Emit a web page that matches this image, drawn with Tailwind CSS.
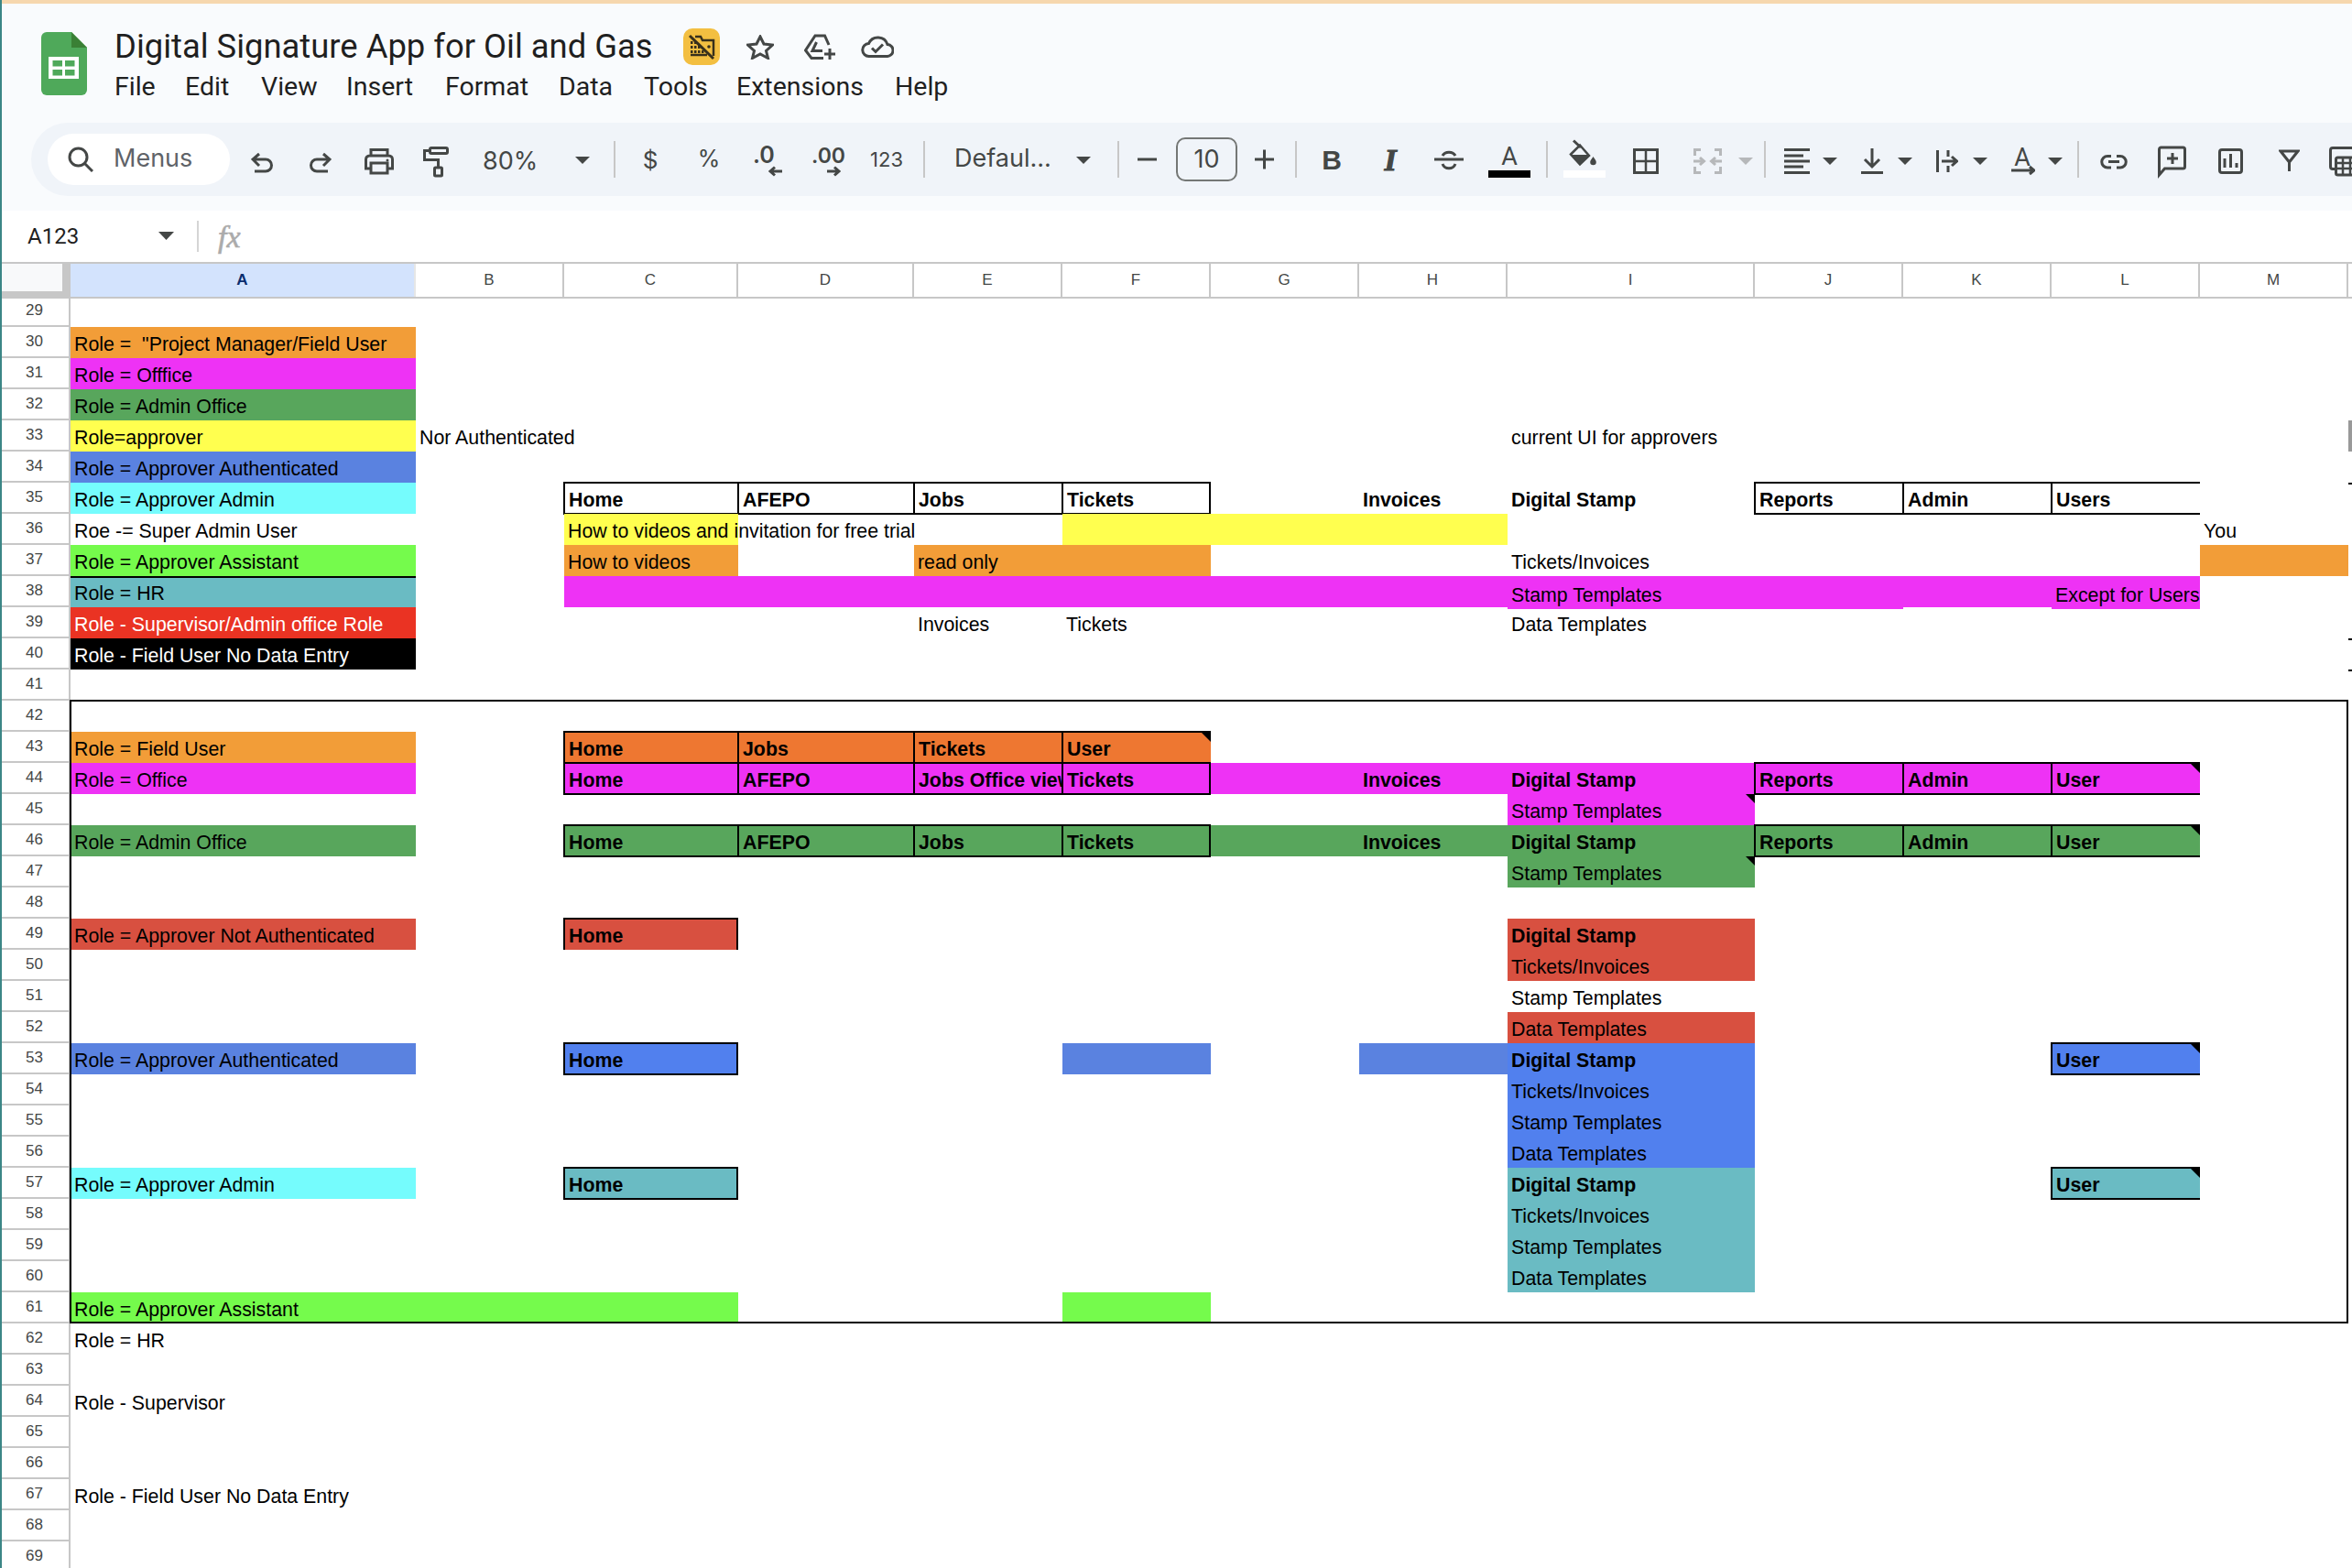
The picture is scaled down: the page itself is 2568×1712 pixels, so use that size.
<!DOCTYPE html>
<html lang="en">
<head>
  <meta charset="UTF-8">
  <title>Digital Signature App for Oil and Gas</title>
  <script src="https://cdn.jsdelivr.net/npm/@tailwindcss/browser@4"></script>
</head>
<body class="bg-white text-black font-['Liberation_Sans',sans-serif]">
<div class="relative w-[2568px] h-[1712px] overflow-hidden">
  <div class="absolute left-0 top-0 w-[2px] h-full bg-[#3b8686] z-20"></div>

  <!-- title + menu -->
  <div class="h-[230px] bg-[#f9fbfd] border-t-[4px] border-[#f6d7ae]">
    <div class="flex pl-[45px] pt-[31px] h-[130px]">
      <svg class="w-[50px] h-[69px]" viewBox="0 0 50 69">
        <path d="M6 0H33L50 17V63a6 6 0 0 1-6 6H6a6 6 0 0 1-6-6V6a6 6 0 0 1 6-6Z" fill="#4fa95a"/>
        <path d="M33 0L50 17H33Z" fill="#3a8035"/>
        <rect x="8" y="27" width="33" height="24" fill="#fff"/>
        <rect x="12.5" y="31" width="10.5" height="6.5" fill="#4fa95a"/><rect x="26" y="31" width="10.5" height="6.5" fill="#4fa95a"/>
        <rect x="12.5" y="41" width="10.5" height="6.5" fill="#4fa95a"/><rect x="26" y="41" width="10.5" height="6.5" fill="#4fa95a"/>
      </svg>
      <div class="ml-[30px] -mt-[4px] font-['Roboto',sans-serif]">
        <div class="flex items-center h-[40px]">
          <span class="w-[621px] text-[36.4px] leading-[40px] whitespace-nowrap text-[#1f1f1f]">Digital Signature App for Oil and Gas</span>
          <div class="w-[40px] h-[40px] rounded-[10px] bg-[#f3bf41]">
            <svg class="w-[40px] h-[40px]" viewBox="0 0 40 40">
              <path d="M13 9H19L21 13H33V30" fill="none" stroke="#38301c" stroke-width="2.5"/>
              <path d="M8 14h2.500v3h-2.500ZM12 14h2.500v3h-2.500ZM8 19h2.500v3h-2.500ZM12 19h2.500v3h-2.500ZM16 19h2.500v3h-2.500ZM8 24h2.500v3h-2.500ZM12 24h2.500v3h-2.500ZM16 24h2.500v3h-2.500ZM20 24h2.500v3h-2.500Z" fill="#38301c"/>
              <path d="M8 29H26" stroke="#38301c" stroke-width="2.500"/>
              <circle cx="28" cy="20" r="1.800" fill="#38301c"/>
              <path d="M7 8L33 33" stroke="#38301c" stroke-width="3"/>
            </svg>
          </div>
          <svg class="ml-[29px] w-[30px] h-[27px]" viewBox="0 0 30 27"><path d="M15 2L19 10L28.500 11L21.500 17.500L23.500 25.500L15 21L6.500 25.500L8.500 17.500L1.500 11L11 10Z" fill="none" stroke="#444746" stroke-width="3"/></svg>
          <svg class="ml-[33px] w-[34px] h-[28px]" viewBox="0 0 34 28"><path d="M27 12L22.500 2H12L1.500 18L8 26.500H21M13.500 9L9 18.500H20" fill="none" stroke="#444746" stroke-width="3"/><path d="M28 16V28M22 22H34" fill="none" stroke="#444746" stroke-width="3"/></svg>
          <svg class="ml-[28px] w-[36px] h-[24px]" viewBox="0 0 36 24"><path d="M9 22.500H28a6.500 6.500 0 0 0 1-13A11 11 0 0 0 8.500 8.500A7 7 0 0 0 9 22.500Z" fill="none" stroke="#444746" stroke-width="3"/><path d="M12 13.500l4 4l8-8" fill="none" stroke="#444746" stroke-width="3"/></svg>
        </div>
        <div class="flex items-center h-[40px] mt-[4px] text-[28.5px] text-[#1f1f1f] whitespace-nowrap">
          <span class="w-[77px]">File</span>
          <span class="w-[83px]">Edit</span>
          <span class="w-[93px]">View</span>
          <span class="w-[108px]">Insert</span>
          <span class="w-[124px]">Format</span>
          <span class="w-[93px]">Data</span>
          <span class="w-[101px]">Tools</span>
          <span class="w-[173px]">Extensions</span>
          <span>Help</span>
        </div>
      </div>
    </div>

    <!-- toolbar -->
    <div class="ml-[34px] h-[80px] pl-[18px] rounded-l-[40px] bg-[#f0f4f9] flex items-center overflow-hidden text-[#444746] font-['Inter',sans-serif]">
      <div class="w-[199px] h-[56px] shrink-0 rounded-full bg-white flex items-center pl-[22px]">
        <svg class="w-[28px] h-[28px]" viewBox="0 0 28 28"><circle cx="11.500" cy="11.500" r="9.500" fill="none" stroke="#444746" stroke-width="3"/><path d="M18.500 18.500L27 27" stroke="#444746" stroke-width="3"/></svg>
        <span class="ml-[22px] text-[27px] text-[#5f6368] -mt-[2px]">Menus</span>
      </div>
      <svg class="shrink-0 ml-[23px] w-[24px] h-[48px]" viewBox="0 0 24 48"><path d="M9 18L2 24L9 31M2 24H16A6.500 6.500 0 0 1 16 37H4" fill="none" stroke="#444746" stroke-width="3"/></svg>
      <svg class="shrink-0 ml-[40px] w-[24px] h-[48px]" viewBox="0 0 24 48"><path d="M15 18L22 24L15 31M22 24H8A6.500 6.500 0 0 0 8 37H20" fill="none" stroke="#444746" stroke-width="3"/></svg>
      <svg class="shrink-0 ml-[36px] w-[32px] h-[48px]" viewBox="0 0 32 48"><path d="M7 20V13.500H25V20M7 34H1.500V24a4 4 0 0 1 4-4H26.500a4 4 0 0 1 4 4V34H25" fill="none" stroke="#444746" stroke-width="3"/><rect x="7" y="28" width="18" height="11" fill="none" stroke="#444746" stroke-width="3"/><circle cx="25" cy="25" r="1.500" fill="#444746"/></svg>
      <svg class="shrink-0 ml-[32px] w-[28px] h-[48px]" viewBox="0 0 28 48"><rect x="7.500" y="11.500" width="19" height="6" rx="1.500" fill="none" stroke="#444746" stroke-width="3"/><path d="M7.500 14.500H1.500V24.500H16.500V33" fill="none" stroke="#444746" stroke-width="3"/><rect x="12.500" y="33" width="8" height="9" rx="1" fill="none" stroke="#444746" stroke-width="3"/></svg>
      <span class="shrink-0 ml-[37px] w-[60px] text-[27px] mt-[4px]">80%</span>
      <svg class="shrink-0 ml-[41px] w-[16px] h-[48px]" viewBox="0 0 16 48"><path d="M0 21H16L8 29Z" fill="#444746"/></svg>
      <div class="shrink-0 ml-[26px] w-[2px] h-[40px] bg-[#c7c7c7]"></div>
      <span class="shrink-0 ml-[31px] w-[14px] flex justify-center text-[26px]">$</span>
      <span class="shrink-0 ml-[46px] w-[22px] flex justify-center text-[25px]">%</span>
      <svg class="shrink-0 ml-[37px] w-[32px] h-[48px]" viewBox="0 0 32 48"><text x="0" y="28" font-size="25" font-weight="600" font-family="Inter" fill="#444746">.0</text><path d="M32 37H19M24 32.500L19 37L24 41.500" fill="none" stroke="#444746" stroke-width="3"/></svg>
      <svg class="shrink-0 ml-[32px] w-[33px] h-[48px] overflow-visible" viewBox="0 0 33 48"><text x="0" y="28" font-size="23" font-weight="600" font-family="Inter" fill="#444746">.00</text><path d="M17 37H30M25 32.500L30 37L25 41.500" fill="none" stroke="#444746" stroke-width="3"/></svg>
      <span class="shrink-0 ml-[32px] w-[34px] text-[22px] whitespace-nowrap flex justify-center">123</span>
      <div class="shrink-0 ml-[23px] w-[2px] h-[40px] bg-[#c7c7c7]"></div>
      <span class="shrink-0 ml-[32px] w-[104px] text-[27px] whitespace-nowrap -mt-[2px]">Defaul...</span>
      <svg class="shrink-0 ml-[29px] w-[16px] h-[48px]" viewBox="0 0 16 48"><path d="M0 21H16L8 29Z" fill="#444746"/></svg>
      <div class="shrink-0 ml-[29px] w-[2px] h-[40px] bg-[#c7c7c7]"></div>
      <svg class="shrink-0 ml-[20px] w-[21px] h-[48px]" viewBox="0 0 21 48"><path d="M0 24H21" stroke="#444746" stroke-width="3"/></svg>
      <div class="shrink-0 ml-[21px] w-[67px] h-[48px] rounded-[10px] border-2 border-[#747775] flex items-center justify-center text-[27px]">10</div>
      <svg class="shrink-0 ml-[19px] w-[21px] h-[48px]" viewBox="0 0 21 48"><path d="M0 24H21M10.500 13.500V34.500" stroke="#444746" stroke-width="3"/></svg>
      <div class="shrink-0 ml-[23px] w-[2px] h-[40px] bg-[#c7c7c7]"></div>
      <span class="shrink-0 ml-[30px] w-[16px] flex justify-center text-[30px] font-bold font-['Liberation_Sans',sans-serif]">B</span>
      <span class="shrink-0 ml-[46px] w-[20px] flex justify-center text-[34px] italic font-bold font-['Liberation_Serif',serif] [-webkit-text-stroke:1px_#444746]">I</span>
      <svg class="shrink-0 ml-[38px] w-[32px] h-[48px]" viewBox="0 0 32 48"><path d="M0 24H32" stroke="#444746" stroke-width="3"/><path d="M9 20a7.500 6 0 0 1 14 0M9 29a7.500 7.500 0 0 0 14 0" fill="none" stroke="#444746" stroke-width="3"/></svg>
      <div class="shrink-0 ml-[27px] w-[46px] h-[48px] flex flex-col items-center">
        <span class="h-[36px] pt-[3px] leading-[36px] text-[27px] font-['Roboto',sans-serif]">A</span>
        <span class="w-[46px] h-[8px] bg-black"></span>
      </div>
      <div class="shrink-0 ml-[17px] w-[2px] h-[40px] bg-[#c7c7c7]"></div>
      <svg class="shrink-0 ml-[17px] w-[46px] h-[48px]" viewBox="0 0 46 48">
        <path d="M8 18.500L18 8.500L28 20L18 29.500Z" fill="none" stroke="#444746" stroke-width="2.500"/>
        <path d="M8.500 19H27.500L18 29.500Z" fill="#444746"/>
        <path d="M11 3.500L19 11" stroke="#444746" stroke-width="3"/>
        <path d="M32.500 21c2 3 3.300 4.500 3.300 6a3.300 3.300 0 0 1-6.600 0c0-1.500 1.300-3 3.300-6Z" fill="#444746"/>
        <rect x="0" y="36" width="46" height="8" fill="#fff"/>
      </svg>
      <svg class="shrink-0 ml-[30px] w-[28px] h-[48px]" viewBox="0 0 28 48"><rect x="1.500" y="13.500" width="25" height="25" fill="none" stroke="#444746" stroke-width="3"/><path d="M14 13V39M1 26H27" stroke="#444746" stroke-width="2.500"/></svg>
      <svg class="shrink-0 ml-[38px] w-[31px] h-[48px]" viewBox="0 0 31 48"><path d="M8 13.500H1.500V20M23 13.500H29.500V20M8 38.500H1.500V32M23 38.500H29.500V32M0 26H11M7 22L11.500 26L7 30M31 26H20M24 22L19.500 26L24 30" fill="none" stroke="#b6b8ba" stroke-width="3"/></svg>
      <svg class="shrink-0 ml-[18px] w-[16px] h-[48px]" viewBox="0 0 16 48"><path d="M0 22H16L8 30Z" fill="#b6b8ba"/></svg>
      <div class="shrink-0 ml-[12px] w-[2px] h-[40px] bg-[#c7c7c7]"></div>
      <svg class="shrink-0 ml-[20px] w-[28px] h-[48px]" viewBox="0 0 28 48"><path d="M0 13.500H28M0 20H21M0 26H28M0 32H21M0 38.500H28" stroke="#444746" stroke-width="3"/></svg>
      <svg class="shrink-0 ml-[14px] w-[16px] h-[48px]" viewBox="0 0 16 48"><path d="M0 22H16L8 30Z" fill="#444746"/></svg>
      <svg class="shrink-0 ml-[26px] w-[24px] h-[48px]" viewBox="0 0 24 48"><path d="M12 12V32M4 24L12 32L20 24M0 38.500H24" fill="none" stroke="#444746" stroke-width="3"/></svg>
      <svg class="shrink-0 ml-[16px] w-[16px] h-[48px]" viewBox="0 0 16 48"><path d="M0 22H16L8 30Z" fill="#444746"/></svg>
      <svg class="shrink-0 ml-[26px] w-[24px] h-[48px]" viewBox="0 0 24 48"><path d="M1.500 14V38M13 14V21M13 31V38M6 26H22M17 21L22.500 26L17 31" fill="none" stroke="#444746" stroke-width="3"/></svg>
      <svg class="shrink-0 ml-[16px] w-[16px] h-[48px]" viewBox="0 0 16 48"><path d="M0 22H16L8 30Z" fill="#444746"/></svg>
      <svg class="shrink-0 ml-[26px] w-[26px] h-[48px]" viewBox="0 0 26 48"><text x="12" y="31" text-anchor="middle" font-size="27" font-family="Roboto" fill="#444746">A</text><path d="M0 36H24M20 32L25 36L20 40" fill="none" stroke="#444746" stroke-width="3"/></svg>
      <svg class="shrink-0 ml-[14px] w-[16px] h-[48px]" viewBox="0 0 16 48"><path d="M0 22H16L8 30Z" fill="#444746"/></svg>
      <div class="shrink-0 ml-[16px] w-[2px] h-[40px] bg-[#c7c7c7]"></div>
      <svg class="shrink-0 ml-[22px] w-[32px] h-[48px]" viewBox="0 0 32 48"><path d="M13 20.500H9a6.200 6.200 0 0 0 0 12.500H13M19 20.500H23a6.200 6.200 0 0 1 0 12.500H19M10 26.500H22" fill="none" stroke="#444746" stroke-width="3"/></svg>
      <svg class="shrink-0 ml-[32px] w-[31px] h-[48px]" viewBox="0 0 31 48"><path d="M1.500 41V13a2 2 0 0 1 2-2H27.500a2 2 0 0 1 2 2V32a2 2 0 0 1-2 2H7.500Z" fill="none" stroke="#444746" stroke-width="3"/><path d="M16 17V29M10 23H22" stroke="#444746" stroke-width="3"/></svg>
      <svg class="shrink-0 ml-[35px] w-[27px] h-[48px]" viewBox="0 0 27 48"><rect x="1.500" y="13.500" width="24" height="25" rx="2.500" fill="none" stroke="#444746" stroke-width="3"/><path d="M7 23V33M13.500 18V33M20 28V33" stroke="#444746" stroke-width="3"/></svg>
      <svg class="shrink-0 ml-[39px] w-[23px] h-[48px]" viewBox="0 0 23 48"><path d="M2 15H21L11.500 27Z" fill="none" stroke="#444746" stroke-width="3"/><path d="M11.500 27V37" stroke="#444746" stroke-width="3"/></svg>
      <svg class="shrink-0 ml-[32px] w-[40px] h-[48px]" viewBox="0 0 40 48"><path d="M30 11.500H4a2.500 2.500 0 0 0-2.500 2.500V32a2.500 2.500 0 0 0 2.500 2.500H6" fill="none" stroke="#444746" stroke-width="3"/><rect x="7.500" y="22" width="30" height="19" rx="2" fill="none" stroke="#444746" stroke-width="3"/><path d="M7 28H38M7 34H38M15 22V41M23 22V41" stroke="#444746" stroke-width="2.500"/></svg>
    </div>
  </div>

  <!-- formula bar -->
  <div class="h-[56px] flex items-center bg-white">
    <span class="ml-[30px] w-[143px] text-[24px] font-['Roboto',sans-serif] text-[#1f1f1f]">A123</span>
    <svg class="w-[17px] h-[10px]" viewBox="0 0 17 10"><path d="M0 0H17L8.500 9Z" fill="#444746"/></svg>
    <div class="ml-[25px] w-[2px] h-[34px] bg-[#d5d5d5]"></div>
    <span class="ml-[21px] text-[34px] italic font-['Liberation_Serif',serif] text-[#ababab] [-webkit-text-stroke:0.6px_#ababab]">fx</span>
  </div>

  <!-- column headers -->
  <div class="relative z-10 h-[40px] border-y-2 border-[#c7c7c7] grid grid-cols-[77px_377px_162px_190px_192px_162px_162px_162px_162px_270px_162px_162px_162px_162px_4px] text-[17px] text-[#444746] bg-white">
    <div class="bg-[#c7c7c7]"><div class="w-[68px] h-[30px] bg-[#f8f9fa]"></div></div>
    <div class="flex items-center justify-center bg-[#d3e3fd] text-[#0b2d6e] font-bold border-r-2 border-[#e6e6e6]">A</div>
    <div class="flex items-center justify-center border-r-2 border-[#c7c7c7]">B</div>
    <div class="flex items-center justify-center border-r-2 border-[#c7c7c7]">C</div>
    <div class="flex items-center justify-center border-r-2 border-[#c7c7c7]">D</div>
    <div class="flex items-center justify-center border-r-2 border-[#c7c7c7]">E</div>
    <div class="flex items-center justify-center border-r-2 border-[#c7c7c7]">F</div>
    <div class="flex items-center justify-center border-r-2 border-[#c7c7c7]">G</div>
    <div class="flex items-center justify-center border-r-2 border-[#c7c7c7]">H</div>
    <div class="flex items-center justify-center border-r-2 border-[#c7c7c7]">I</div>
    <div class="flex items-center justify-center border-r-2 border-[#c7c7c7]">J</div>
    <div class="flex items-center justify-center border-r-2 border-[#c7c7c7]">K</div>
    <div class="flex items-center justify-center border-r-2 border-[#c7c7c7]">L</div>
    <div class="flex items-center justify-center border-r-2 border-[#c7c7c7]">M</div>
    <div></div>
  </div>

  <!-- sheet -->
  <div id="sheet" class="-mt-[3px] grid grid-cols-[77px_377px_162px_190px_192px_162px_162px_162px_162px_270px_162px_162px_162px_162px_4px] auto-rows-[34px]"></div>
</div>

<script>
  const sheet = document.getElementById("sheet");

  // fill colours
  const orange = "bg-[#f29d38]", magenta = "bg-[#ee32f5]", green = "bg-[#58a65c]", yellow = "bg-[#ffff4f]";
  const blue = "bg-[#5a82e0]", blue2 = "bg-[#5180ee]", cyan = "bg-[#75fcfd]", lime = "bg-[#75fb4c]";
  const teal = "bg-[#6abbc3]", red = "bg-[#ea3323]", red2 = "bg-[#d85040]", dark = "bg-[#ee7731]";

  // bordered header cells
  const box = "font-bold -my-px -ml-px pb-[1px] border-y-2 border-l-2 border-black";
  const boxEnd = "font-bold -my-px -ml-px pb-[1px] border-2 border-black";

  // row, column (A = 2), span, text, classes, corner note
  const cells = [
    [30, 2, 1, 'Role =  "Project Manager/Field User', orange],
    [31, 2, 1, "Role = Offfice", magenta],
    [32, 2, 1, "Role = Admin Office", green],
    [33, 2, 1, "Role=approver", yellow],
    [33, 3, 1, "Nor Authenticated", ""],
    [33, 10, 1, "current UI for approvers", ""],
    [33, 15, 1, "", "bg-[#999999]"],
    [34, 2, 1, "Role = Approver Authenticated", blue],
    [35, 2, 1, "Role = Approver Admin", cyan],
    [35, 4, 1, "Home", box],
    [35, 5, 1, "AFEPO", box],
    [35, 6, 1, "Jobs", box],
    [35, 7, 1, "Tickets", boxEnd],
    [35, 9, 1, "Invoices", "font-bold"],
    [35, 10, 1, "Digital Stamp", "font-bold"],
    [35, 11, 1, "Reports", box],
    [35, 12, 1, "Admin", box],
    [35, 13, 1, "Users", box],
    [35, 15, 1, "", "border-t-2 border-black"],
    [36, 2, 1, "Roe -= Super Admin User", ""],
    [36, 4, 1, "How to videos and invitation for free trial", yellow],
    [36, 7, 3, "", yellow],
    [36, 14, 1, "You", ""],
    [37, 2, 1, "Role = Approver Assistant", lime],
    [37, 4, 1, "How to videos", orange],
    [37, 6, 2, "read only", orange],
    [37, 10, 1, "Tickets/Invoices", ""],
    [37, 14, 1, "", orange],
    [38, 2, 1, "Role = HR", teal + " border-t-2 border-black"],
    [38, 4, 6, "", magenta],
    [38, 10, 2, "Stamp Templates", magenta + " -mb-[2px]"],
    [38, 12, 1, "", magenta],
    [38, 13, 1, "Except for Users", magenta + " -mb-[2px]"],
    [39, 2, 1, "Role - Supervisor/Admin office Role", red + " text-white"],
    [39, 6, 1, "Invoices", ""],
    [39, 7, 1, "Tickets", ""],
    [39, 10, 1, "Data Templates", ""],
    [40, 2, 1, "Role - Field User No Data Entry", "bg-black text-white"],
    [40, 15, 1, "", "border-t-2 border-black"],
    [41, 15, 1, "", "border-t-2 border-black"],

    [43, 2, 1, "Role = Field User", orange],
    [43, 4, 1, "Home", dark + " " + box],
    [43, 5, 1, "Jobs", dark + " " + box],
    [43, 6, 1, "Tickets", dark + " " + box],
    [43, 7, 1, "User", dark + " " + box, true],
    [44, 2, 1, "Role = Office", magenta],
    [44, 4, 1, "Home", magenta + " " + box],
    [44, 5, 1, "AFEPO", magenta + " " + box],
    [44, 6, 1, "Jobs Office view", magenta + " overflow-hidden " + box],
    [44, 7, 1, "Tickets", magenta + " " + boxEnd],
    [44, 8, 1, "", magenta],
    [44, 9, 1, "Invoices", magenta + " font-bold"],
    [44, 10, 1, "Digital Stamp", magenta + " font-bold"],
    [44, 11, 1, "Reports", magenta + " " + box],
    [44, 12, 1, "Admin", magenta + " " + box],
    [44, 13, 1, "User", magenta + " " + box, true],
    [45, 10, 1, "Stamp Templates", magenta, true],
    [46, 2, 1, "Role = Admin Office", green],
    [46, 4, 1, "Home", green + " " + box],
    [46, 5, 1, "AFEPO", green + " " + box],
    [46, 6, 1, "Jobs", green + " " + box],
    [46, 7, 1, "Tickets", green + " " + boxEnd],
    [46, 8, 1, "", green],
    [46, 9, 1, "Invoices", green + " font-bold"],
    [46, 10, 1, "Digital Stamp", green + " font-bold"],
    [46, 11, 1, "Reports", green + " " + box],
    [46, 12, 1, "Admin", green + " " + box],
    [46, 13, 1, "User", green + " " + box, true],
    [47, 10, 1, "Stamp Templates", green, true],

    [49, 2, 1, "Role = Approver Not Authenticated", red2],
    [49, 4, 1, "Home", red2 + " font-bold -mt-px -ml-px border-t-2 border-x-2 border-black"],
    [49, 10, 1, "Digital Stamp", red2 + " font-bold"],
    [50, 10, 1, "Tickets/Invoices", red2],
    [51, 10, 1, "Stamp Templates", ""],
    [52, 10, 1, "Data Templates", red2],
    [53, 2, 1, "Role = Approver Authenticated", blue],
    [53, 4, 1, "Home", blue2 + " " + boxEnd],
    [53, 7, 1, "", blue],
    [53, 9, 1, "", blue],
    [53, 10, 1, "Digital Stamp", blue2 + " font-bold"],
    [53, 13, 1, "User", blue2 + " " + box, true],
    [54, 10, 1, "Tickets/Invoices", blue2],
    [55, 10, 1, "Stamp Templates", blue2],
    [56, 10, 1, "Data Templates", blue2],
    [57, 2, 1, "Role = Approver Admin", cyan],
    [57, 4, 1, "Home", teal + " " + boxEnd],
    [57, 10, 1, "Digital Stamp", teal + " font-bold"],
    [57, 13, 1, "User", teal + " " + box, true],
    [58, 10, 1, "Tickets/Invoices", teal],
    [59, 10, 1, "Stamp Templates", teal],
    [60, 10, 1, "Data Templates", teal],
    [61, 2, 3, "Role = Approver Assistant", lime],
    [61, 7, 1, "", lime],
    [62, 2, 1, "Role = HR", ""],
    [64, 2, 1, "Role - Supervisor", ""],
    [67, 2, 1, "Role - Field User No Data Entry", ""],
  ];

  for (let r = 29; r <= 69; r++) {
    const head = document.createElement("div");
    head.className = "flex items-center justify-center bg-white border-r-2 border-b-2 border-[#c7c7c7] text-[17px] text-[#444746]";
    head.style.gridColumn = "1";
    head.style.gridRow = String(r - 28);
    head.textContent = r;
    sheet.appendChild(head);
  }

  for (const [row, col, span, text, cls, note] of cells) {
    const cell = document.createElement("div");
    const pad = cls.includes("pb-[1px]") ? "" : "pb-[2px]";
    cell.className = `relative flex items-end whitespace-pre pl-[4px] leading-[26px] text-[21.33px] ${pad} ${cls}`;
    cell.style.gridColumn = `${col} / span ${span}`;
    cell.style.gridRow = String(row - 28);
    cell.textContent = text;
    if (note) {
      const mark = document.createElement("div");
      mark.className = "absolute top-0 right-0 w-0 h-0 border-t-[10px] border-t-black border-l-[10px] border-l-transparent";
      cell.appendChild(mark);
    }
    sheet.appendChild(cell);
  }

  // outline round rows 42 to 61
  const outline = document.createElement("div");
  outline.className = "z-10 -mt-px -ml-px pointer-events-none border-2 border-black";
  outline.style.gridColumn = "2 / 15";
  outline.style.gridRow = "14 / 34";
  sheet.appendChild(outline);
</script>
</body>
</html>
